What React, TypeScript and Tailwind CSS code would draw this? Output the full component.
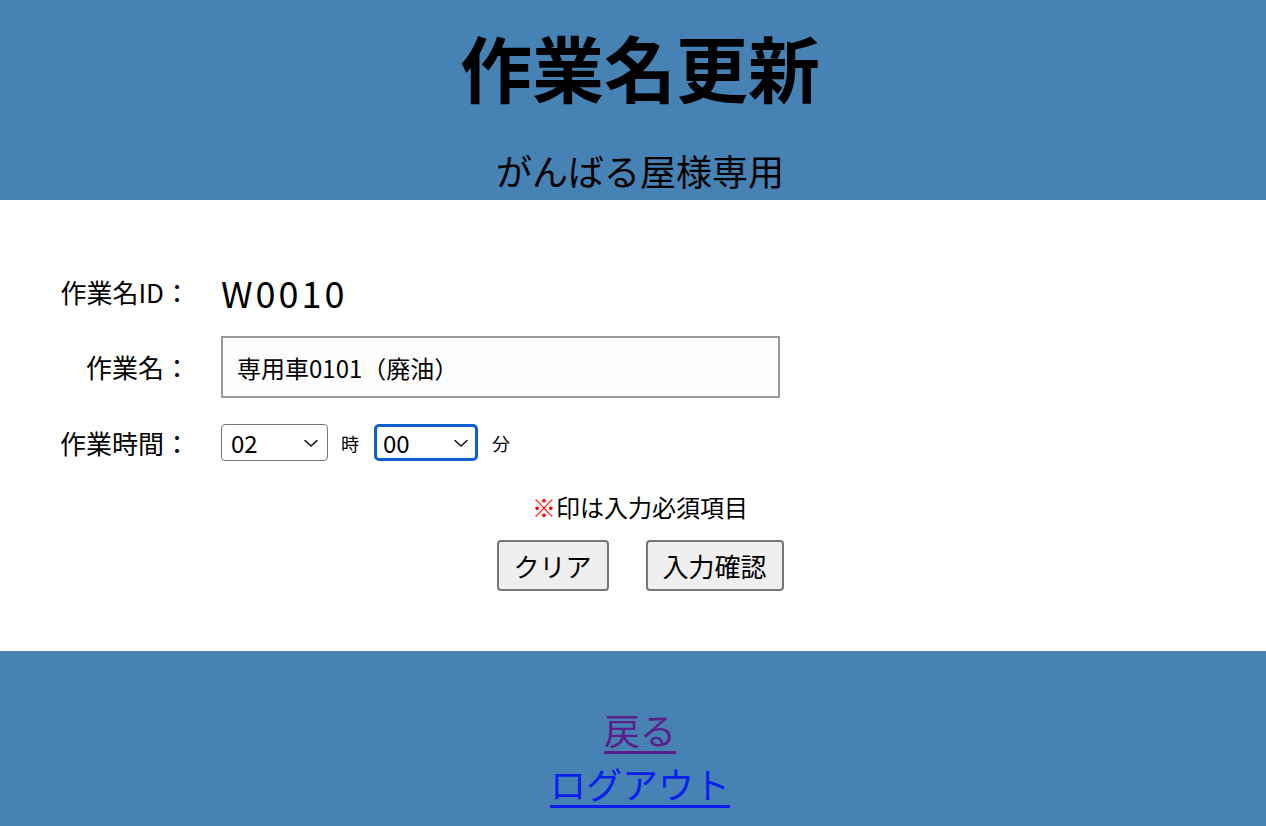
import { useState } from "react";

const FONT = { fontFamily: '"Noto Sans CJK JP", "Noto Sans", sans-serif' };

function Chevron() {
  return (
    <svg width="16" height="10" viewBox="0 0 16 10" className="pointer-events-none absolute right-[9px] top-1/2 -translate-y-1/2">
      <path d="M2 2.5 L8 8 L14 2.5" fill="none" stroke="#111" strokeWidth="1.6" strokeLinecap="round" strokeLinejoin="round" />
    </svg>
  );
}

function TimeSelect({ value, options, focused }: { value: string; options: string[]; focused?: boolean }) {
  return (
    <div className="relative">
      <select
        defaultValue={value}
        className={
          focused
            ? "h-[37px] w-[104px] appearance-none rounded-[5px] border-[3px] border-[#0f5fd0] bg-white pl-[6px] text-[24px] leading-none text-black outline-none"
            : "h-[37px] w-[107px] appearance-none rounded-[4px] border border-[#767676] bg-white pl-[9px] text-[24px] leading-none text-black outline-none"
        }
        style={FONT}
      >
        {options.map((o) => (
          <option key={o} value={o}>
            {o}
          </option>
        ))}
      </select>
      <Chevron />
    </div>
  );
}

export default function App() {
  const [name, setName] = useState("専用車0101（廃油）");
  const hours = Array.from({ length: 24 }, (_, i) => String(i).padStart(2, "0"));
  const minutes = ["00", "15", "30", "45"];

  return (
    <div className="h-[826px] w-full overflow-hidden bg-white text-black" style={FONT}>
      {/* header */}
      <header className="flex h-[200px] flex-col items-center bg-[#4682b4] pl-[14px]">
        <h1 className="mt-[30px] text-[72px] font-bold leading-none">作業名更新</h1>
        <p className="mt-[50px] text-[36px] leading-none">がんばる屋様専用</p>
      </header>

      {/* form */}
      <main className="flex h-[451px] flex-col pt-[74px]">
        <div className="grid grid-cols-[190px_auto] items-center gap-x-[31px] gap-y-[26px] self-start">
          <span className="text-right text-[26px] leading-none">作業名ID：</span>
          <span className="text-[36px] leading-none tracking-[3px]">W0010</span>

          <span className="text-right text-[26px] leading-none">作業名：</span>
          <input
            value={name}
            onChange={(e) => setName(e.target.value)}
            className="h-[62px] w-[559px] border-2 border-[#999999] bg-[#fdfdfd] px-[14px] text-[24px] text-black outline-none"
            style={FONT}
          />

          <span className="text-right text-[26px] leading-none">作業時間：</span>
          <div className="flex items-center">
            <TimeSelect value="02" options={hours} />
            <span className="ml-[13px] mr-[15px] text-[18px] leading-none">時</span>
            <TimeSelect value="00" options={minutes} focused />
            <span className="ml-[14px] text-[18px] leading-none">分</span>
          </div>
        </div>

        <p className="mt-[34px] pl-[14px] text-center text-[24px] leading-none">
          <span className="text-[#ff0000]">※</span>印は入力必須項目
        </p>

        <div className="mt-[21px] flex justify-center gap-[37px] pl-[14px]">
          <button
            className="h-[51px] w-[112px] rounded-[4px] border-2 border-[#767676] bg-[#efefef] text-[26px] leading-none"
            style={FONT}
          >
            クリア
          </button>
          <button
            className="h-[51px] w-[138px] rounded-[4px] border-2 border-[#767676] bg-[#efefef] text-[26px] leading-none"
            style={FONT}
          >
            入力確認
          </button>
        </div>
      </main>

      {/* footer */}
      <footer className="flex h-[175px] flex-col items-center bg-[#4682b4] pl-[14px] pt-[51px]">
        <a href="#back" className="text-[36px] leading-[1.5] text-[#5b1e8b] underline underline-offset-[6px]">
          戻る
        </a>
        <a href="#logout" className="text-[36px] leading-[1.5] text-[#0a1ef0] underline underline-offset-[6px]">
          ログアウト
        </a>
      </footer>
    </div>
  );
}
